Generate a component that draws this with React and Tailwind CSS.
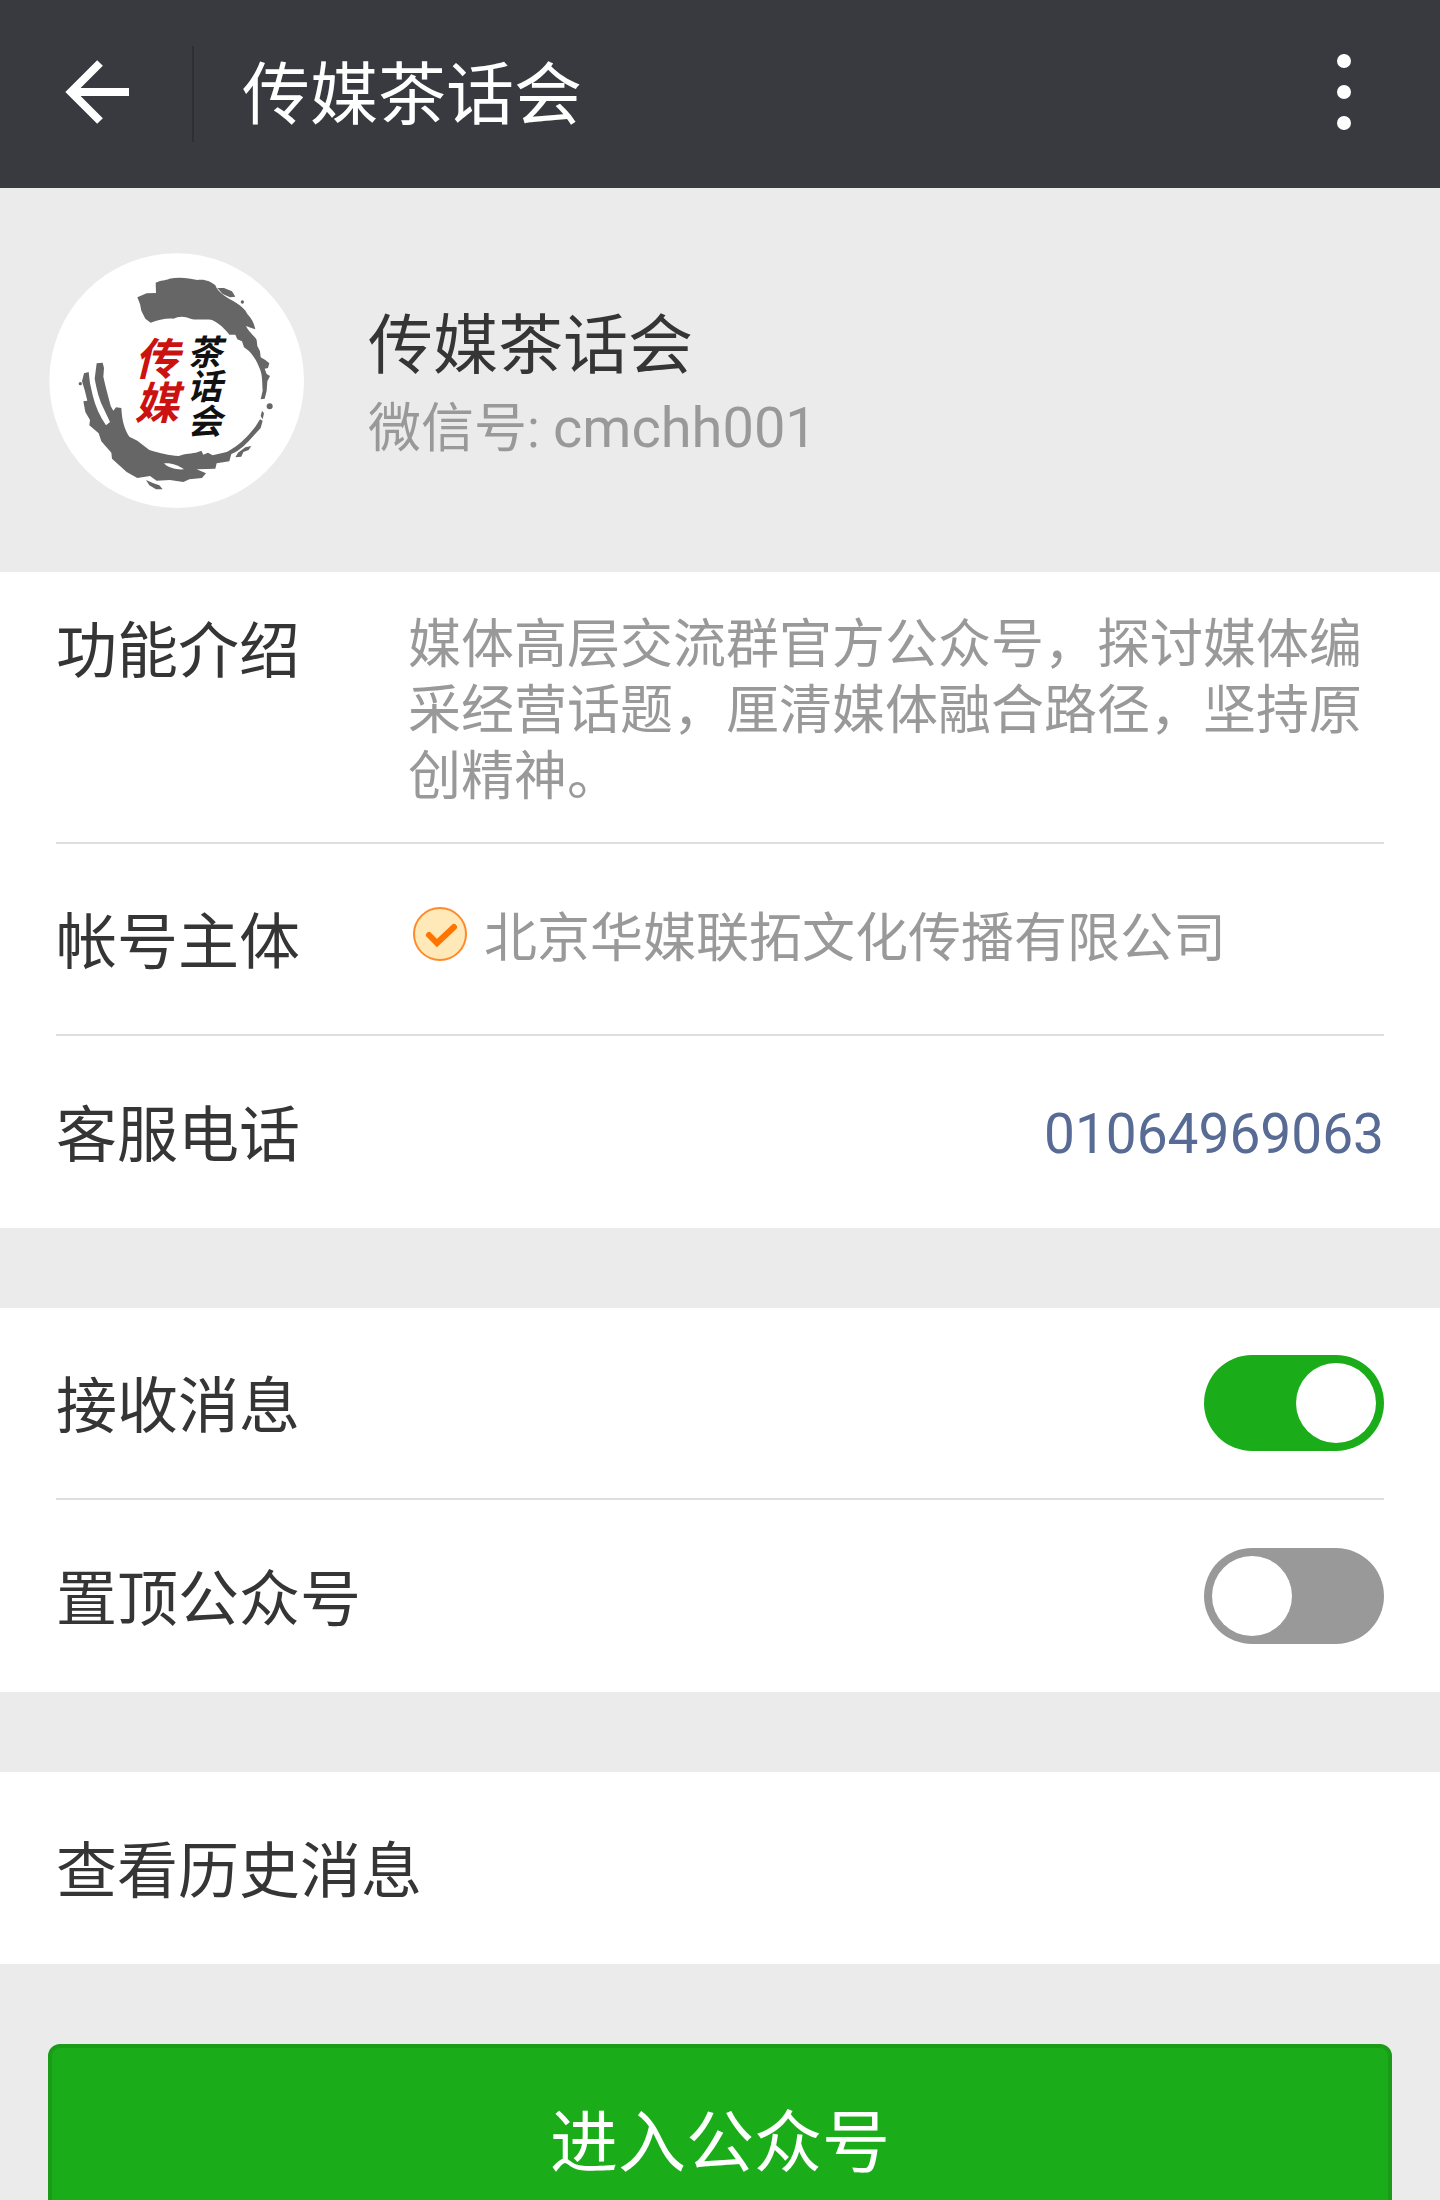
import React, { useState } from 'react';

const BackIcon = () => (
  <svg className="w-16 h-16 overflow-visible" viewBox="0 0 64 64" fill="none" stroke="white">
    <path strokeWidth="8" d="M36 3L7 32L36 61M7 32H65" />
  </svg>
);

const MoreIcon = () => (
  <svg className="w-4 h-20" viewBox="0 0 16 80" fill="white">
    <circle cx="8" cy="9" r="7" />
    <circle cx="8" cy="40" r="7" />
    <circle cx="8" cy="71" r="7" />
  </svg>
);

const VerifiedIcon = () => (
  <svg className="w-14 h-14 mb-2 shrink-0" viewBox="0 0 56 56" fill="none">
    <circle cx="28" cy="27" r="26" fill="#ffe9b8" stroke="#ff8a2b" strokeWidth="2" />
    <path d="M17 28L25 36L42 20" stroke="#ff7300" strokeWidth="6" strokeLinecap="round" />
  </svg>
);

// ink ring around the name of the account
const Avatar = () => (
  <svg className="w-64 h-64 shrink-0" viewBox="54 36 768 768">
    <circle cx="440" cy="422" r="382" fill="white" />
    <g fill="#666666">
      <path d="M322 172L350 160L378 159L377 128C392 120 406 122 418 116C446 110 478 114 502 120C522 116 544 124 556 136C564 158 592 174 618 188C634 198 646 208 652 222C664 234 672 248 676 268L664 264L648 258C656 276 674 288 680 300L682 318L690 334L692 352L706 360L718 370L714 384L704 386L710 402L720 408L712 424L710 452L704 476L692 478L698 452C696 430 698 408 690 388C682 366 672 348 656 332L642 322L636 304L622 298L616 284L598 284C586 268 566 248 546 240C526 236 500 242 482 236C464 228 446 228 430 236C408 234 384 240 362 248L346 236L334 212L330 192Z" />
      <path d="M562 144L582 144L606 154L616 170L600 172L578 162Z" />
      <path d="M200 370L218 368L222 384L220 410C226 438 234 466 242 498L250 512L258 502L274 504C276 540 282 566 298 590L322 602L358 630C392 640 416 646 446 648C466 640 486 642 504 636L514 632L520 644L534 638L548 646L590 636C616 622 640 602 656 584L676 560L690 538L698 542L692 564L668 590C650 610 632 630 604 642L598 664L560 670L556 686L500 688L528 700L516 714L478 718L460 726L420 720L380 722L360 708L322 714L290 696L246 656L244 638L214 604L206 580L178 556L180 540L166 516L160 484L172 482L164 450L156 424L162 400L176 396L180 430L188 466C196 500 210 530 228 556L240 546L222 508C208 482 200 450 194 416Z" />
      <path d="M348 720L370 730L388 736L398 748L378 748L358 736Z" />
      <path d="M646 622L664 618L656 630L640 636L634 650L616 652L624 638Z" />
      <path d="M696 512L702 520L698 538L692 528Z" />
      <circle cx="719" cy="499" r="9" />
      <circle cx="637" cy="186" r="5" />
      <circle cx="151" cy="431" r="5" />
    </g>
    <path d="M402 670C424 668 446 676 462 688C440 690 414 684 402 670Z" fill="white" />
    <g
      fontFamily="'Noto Sans CJK SC', sans-serif"
      fontWeight="bold"
      fontStyle="italic"
      writingMode="vertical-rl"
    >
      <text x="380" y="290" fill="#cc1111" fontSize="132">
        传媒
      </text>
      <text x="524" y="282" fill="#111111" fontSize="104">
        茶话会
      </text>
    </g>
  </svg>
);

const Row = ({ label, htmlFor, children }) => (
  <div className="flex items-center justify-between h-48 border-b-2 border-[#dedede] last:border-b-0">
    <label htmlFor={htmlFor} className="pt-2 text-[61px] leading-[72px] text-[#353535]">
      {label}
    </label>
    {children}
  </div>
);

const Toggle = ({ id, checked, onChange }) => (
  <input
    id={id}
    type="checkbox"
    role="switch"
    checked={checked}
    onChange={(e) => onChange(e.target.checked)}
    className="appearance-none flex w-[180px] h-24 p-2 rounded-full bg-[#999999] checked:bg-[#1aad19] checked:justify-end before:content-[''] before:w-20 before:h-20 before:rounded-full before:bg-white"
  />
);

const App = () => {
  const [receive, setReceive] = useState(true);
  const [pinned, setPinned] = useState(false);

  return (
    <div className="min-h-screen bg-[#ebebeb] font-[Roboto,'Noto_Sans_CJK_SC',sans-serif]">
      {/* Top bar */}
      <header className="flex items-center h-47 bg-[#393a3f] text-white">
        <button aria-label="返回" className="px-16 pb-1">
          <BackIcon />
        </button>
        <div className="w-0.5 h-24 bg-[#2e2f33]"></div>
        <h1 className="flex-1 pl-12 pt-1 text-[68px] leading-[80px]">传媒茶话会</h1>
        <button aria-label="更多" className="px-22 pb-1">
          <MoreIcon />
        </button>
      </header>

      {/* Profile */}
      <section className="flex items-center gap-16 px-12 py-16">
        <Avatar />
        <div className="pt-4">
          <h2 className="text-[65px] leading-[80px] text-[#353535]">传媒茶话会</h2>
          <p className="text-[53px] leading-[84px] text-[#999999]">
            微信号: <span className="text-[56px]">cmchh001</span>
          </p>
        </div>
      </section>

      {/* Account info */}
      <section className="bg-white px-14">
        <div className="flex pt-10 pb-8 border-b-2 border-[#dedede]">
          <h3 className="w-88 shrink-0 pt-1 text-[61px] leading-[72px] text-[#353535]">
            功能介绍
          </h3>
          <p className="text-[53px] leading-[66px] text-[#999999]">
            媒体高层交流群官方公众号，探讨媒体编采经营话题，厘清媒体融合路径，坚持原创精神。
          </p>
        </div>
        <div className="flex items-center h-48 border-b-2 border-[#dedede]">
          <h3 className="w-88 shrink-0 pt-2 text-[61px] leading-[72px] text-[#353535]">
            帐号主体
          </h3>
          <div className="flex items-center gap-4 pl-1">
            <VerifiedIcon />
            <p className="text-[53px] leading-[66px] text-[#999999]">
              北京华媒联拓文化传播有限公司
            </p>
          </div>
        </div>
        <Row label="客服电话">
          <a href="tel:01064969063" className="pt-1 text-[55px] leading-[72px] text-[#576b95]">
            01064969063
          </a>
        </Row>
      </section>

      {/* Message settings */}
      <section className="mt-20 bg-white px-14">
        <Row label="接收消息" htmlFor="receive">
          <Toggle id="receive" checked={receive} onChange={setReceive} />
        </Row>
        <Row label="置顶公众号" htmlFor="pinned">
          <Toggle id="pinned" checked={pinned} onChange={setPinned} />
        </Row>
      </section>

      <section className="mt-20 bg-white">
        <button className="flex items-center w-full h-48 px-14 pt-2 text-[61px] leading-[72px] text-[#353535]">
          查看历史消息
        </button>
      </section>

      <div className="px-12 pt-20">
        <button className="w-full h-50 rounded-xl border-4 border-[#1a9c19] bg-[#1aad19] text-[68px] leading-[80px] text-white">
          进入公众号
        </button>
      </div>
    </div>
  );
};

export default App;
